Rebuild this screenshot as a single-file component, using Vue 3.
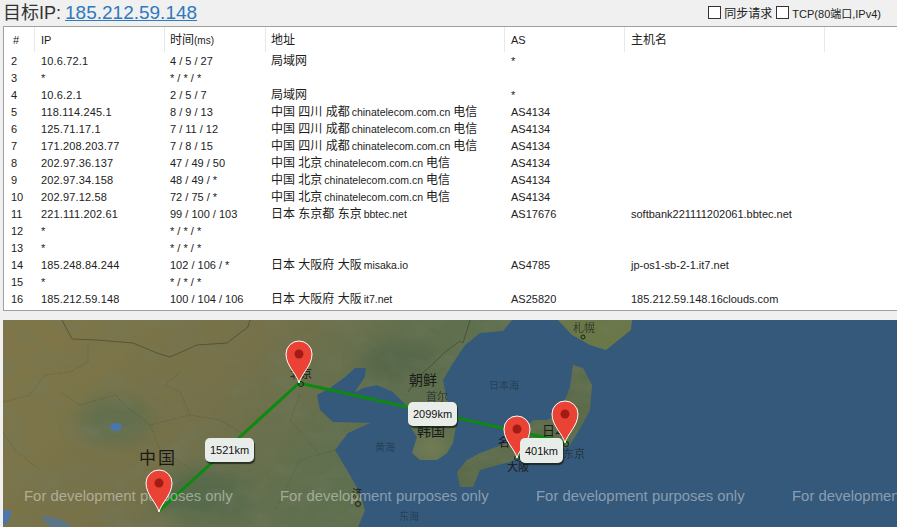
<script setup>
const columns = [
  { label: '#', cls: 'num' },
  { label: 'IP', cls: 'latin first' },
  { label: '时间', small: '(ms)', cls: 'tight' },
  { label: '地址', cls: 'tight' },
  { label: 'AS', cls: 'latin' },
  { label: '主机名' },
]

const rows = [
  ['2', '10.6.72.1', '4 / 5 / 27', '局域网', '', '', '*', ''],
  ['3', '*', '* / * / *', '', '', '', '', ''],
  ['4', '10.6.2.1', '2 / 5 / 7', '局域网', '', '', '*', ''],
  ['5', '118.114.245.1', '8 / 9 / 13', '中国 四川 成都', 'chinatelecom.com.cn', '电信', 'AS4134', ''],
  ['6', '125.71.17.1', '7 / 11 / 12', '中国 四川 成都', 'chinatelecom.com.cn', '电信', 'AS4134', ''],
  ['7', '171.208.203.77', '7 / 8 / 15', '中国 四川 成都', 'chinatelecom.com.cn', '电信', 'AS4134', ''],
  ['8', '202.97.36.137', '47 / 49 / 50', '中国 北京', 'chinatelecom.com.cn', '电信', 'AS4134', ''],
  ['9', '202.97.34.158', '48 / 49 / *', '中国 北京', 'chinatelecom.com.cn', '电信', 'AS4134', ''],
  ['10', '202.97.12.58', '72 / 75 / *', '中国 北京', 'chinatelecom.com.cn', '电信', 'AS4134', ''],
  ['11', '221.111.202.61', '99 / 100 / 103', '日本 东京都 东京', 'bbtec.net', '', 'AS17676', 'softbank221111202061.bbtec.net'],
  ['12', '*', '* / * / *', '', '', '', '', ''],
  ['13', '*', '* / * / *', '', '', '', '', ''],
  ['14', '185.248.84.244', '102 / 106 / *', '日本 大阪府 大阪', 'misaka.io', '', 'AS4785', 'jp-os1-sb-2-1.it7.net'],
  ['15', '*', '* / * / *', '', '', '', '', ''],
  ['16', '185.212.59.148', '100 / 104 / 106', '日本 大阪府 大阪', 'it7.net', '', 'AS25820', '185.212.59.148.16clouds.com'],
].map(([n, ip, time, place, domain, isp, as, host]) => ({ n, ip, time, place, domain, isp, as, host }))

const pins = [
  { id: 'cd', x: 159, y: 512 },
  { id: 'bj', x: 299, y: 383 },
  { id: 'os', x: 517, y: 458 },
  { id: 'tk', x: 565, y: 443 },
]

const pinPath = 'M0 0 C-2 -9 -13 -17 -13 -29 A13 13 0 1 1 13 -29 C13 -17 2 -9 0 0 Z'

const tags = [
  { text: '1521km', left: 202, top: 118, width: 49, height: 24 },
  { text: '2099km', left: 405, top: 82, width: 49, height: 24 },
  { text: '401km', left: 517, top: 118, width: 43, height: 25 },
]

const watermarks = [24, 280, 536, 792]

const mainland = 'M3 320 L512 320 L503 331 L480 333 L465 345 L453 363 L443 380 L447 400 L457 420 L453 443 L447 453 L437 460 L420 460 L412 453 L417 437 L408 423 L408 407 L393 392 L377 385 L363 388 L355 392 L365 377 L366 368 L355 368 L345 377 L330 388 L317 395 L320 410 L333 422 L370 423 L348 433 L335 450 L347 470 L360 493 L365 510 L358 527 L3 527 Z'
const honshu = 'M467 460 L480 453 L507 443 L520 433 L533 420 L547 420 L560 413 L570 387 L573 365 L583 368 L592 385 L590 410 L582 425 L570 445 L560 450 L540 452 L525 455 L510 462 L498 465 L480 470 L473 487 L460 487 L457 472 Z'
const hokkaido = 'M558 320 L632 320 L631 330 L606 350 L590 345 L572 335 Z'

const mapLabels = [
  { text: '中国', x: 139, y: 464, size: 17, cls: 'strong', gap: 2 },
  { text: '朝鲜', x: 409, y: 385, size: 14, cls: 'strong', gap: 0 },
  { text: '韩国', x: 417, y: 436, size: 14, cls: 'strong', gap: 0 },
  { text: '首尔', x: 426, y: 401, size: 11, cls: 'mid', gap: 0 },
  { text: '北京', x: 290, y: 378, size: 11, cls: 'strong', gap: 0 },
  { text: '名', x: 498, y: 447, size: 12, cls: 'strong', gap: 0 },
  { text: '大阪', x: 507, y: 471, size: 11, cls: 'strong', gap: 0 },
  { text: '日本', x: 542, y: 435, size: 13, cls: 'strong', gap: 0 },
  { text: '东京', x: 563, y: 458, size: 11, cls: 'mid', gap: 0 },
  { text: '日本海', x: 489, y: 389, size: 10, cls: 'sea', gap: 0 },
  { text: '黄海', x: 375, y: 451, size: 10, cls: 'sea', gap: 0 },
  { text: '东海', x: 399, y: 520, size: 10, cls: 'sea', gap: 0 },
  { text: '济', x: 352, y: 497, size: 10, cls: 'strong', gap: 0 },
  { text: '札幌', x: 573, y: 332, size: 11, cls: 'mid', gap: 0 },
]
</script>

<template>
  <div class="page">
    <header class="topbar">
      <div class="title">目标IP: <a class="target">185.212.59.148</a></div>
      <div class="options">
        <span class="box"></span><span class="opt">同步请求</span>
        <span class="box second"></span><span class="opt small">TCP(80端口,IPv4)</span>
      </div>
    </header>

    <section class="panel">
      <div class="row head">
        <div v-for="c in columns" :key="c.label" class="cell" :class="c.cls">
          {{ c.label }}<span v-if="c.small" class="unit">{{ c.small }}</span>
        </div>
      </div>
      <div v-for="r in rows" :key="r.n" class="row">
        <div class="cell num">{{ r.n }}</div>
        <div class="cell wide">{{ r.ip }}</div>
        <div class="cell tight">{{ r.time }}</div>
        <div class="cell tight">
          <span class="cjk">{{ r.place }}</span>
          <span v-if="r.domain" class="domain">{{ r.domain }}</span>
          <span v-if="r.isp" class="cjk">{{ r.isp }}</span>
        </div>
        <div class="cell">{{ r.as }}</div>
        <div class="cell">{{ r.host }}</div>
      </div>
    </section>

    <section class="map">
      <svg class="canvas" viewBox="3 320 894 207" preserveAspectRatio="none">
        <defs>
          <linearGradient id="landGrad" gradientUnits="userSpaceOnUse" x1="60" y1="330" x2="300" y2="527">
            <stop offset="0" stop-color="#7e7648" />
            <stop offset="0.5" stop-color="#76714a" />
            <stop offset="0.8" stop-color="#66704e" />
            <stop offset="1" stop-color="#5f7050" />
          </linearGradient>
          <filter id="soft" x="-5%" y="-5%" width="110%" height="110%"><feGaussianBlur stdDeviation="0.7" /></filter>
          <filter id="blur" x="-40%" y="-40%" width="180%" height="180%"><feGaussianBlur stdDeviation="9" /></filter>
          <filter id="terrain" x="0" y="0" width="100%" height="100%">
            <feTurbulence type="fractalNoise" baseFrequency="0.03 0.045" numOctaves="4" seed="7" />
            <feColorMatrix type="matrix" values="0 0 0 0 0.17  0 0 0 0 0.2  0 0 0 0 0.12  2.4 0 0 0 -1.05" />
          </filter>
          <clipPath id="landClip">
            <path :d="mainland" />
            <path :d="honshu" />
            <path :d="hokkaido" />
          </clipPath>
        </defs>

        <rect x="3" y="320" width="894" height="207" fill="#35597a" />

        <g filter="url(#soft)">
          <path fill="url(#landGrad)" :d="mainland" />
          <path fill="#5c6c4c" :d="honshu" />
          <path fill="#6a7849" :d="hokkaido" />
        </g>

        <g clip-path="url(#landClip)">
          <ellipse cx="115" cy="420" rx="38" ry="24" fill="#64704e" filter="url(#blur)" />
          <ellipse cx="205" cy="495" rx="50" ry="26" fill="#576a4b" filter="url(#blur)" />
          <ellipse cx="400" cy="362" rx="40" ry="20" fill="#566748" filter="url(#blur)" />
          <ellipse cx="432" cy="448" rx="14" ry="10" fill="#7c8455" filter="url(#blur)" />
          <rect x="3" y="320" width="640" height="207" filter="url(#terrain)" opacity="0.4" />
        </g>

        <g fill="#4a76ad" filter="url(#soft)">
          <ellipse cx="116" cy="427" rx="6" ry="4" />
          <path d="M3 510 L12 511 L8 522 L3 525 Z" />
          <path d="M40 516 Q60 515 72 527 L50 527 Z" opacity="0.6" />
        </g>

        <path class="border solid" d="M62 320 L72 339 L97 340 L133 343 L157 353 L170 357 L197 345 L227 343 L248 327 L250 320" />
        <path class="border solid" d="M408 392 L420 375 L432 365 L445 352 L460 341 L463 343 L470 320" />
        <path class="border" d="M3 402 L30 395 L45 375 L70 372 L88 362 L88 345 M80 405 L60 392 M80 405 L115 395 L130 410 L150 425 L170 420 L190 415 L180 392 L165 385 L180 372 M150 425 L160 450 L190 468 M3 432 L15 450 L40 470 M190 415 L220 420 L245 435 M300 395 L290 420 L320 455 M335 450 L300 460 L275 510" />

        <line class="route" x1="159" y1="511" x2="299" y2="383" />
        <polyline class="route" points="299,383 565,442 517,457" />

        <circle cx="583" cy="337" r="2" class="dot" />
        <circle cx="358" cy="504" r="2.5" class="dot" />
        <circle cx="301" cy="384" r="2.5" class="dot" />
        <circle cx="517" cy="458" r="2.5" class="dot" />
        <circle cx="566" cy="444" r="2.5" class="dot" />

        <text
          v-for="l in mapLabels"
          :key="l.text + l.x"
          :x="l.x"
          :y="l.y"
          :font-size="l.size"
          :letter-spacing="l.gap"
          class="place"
          :class="l.cls"
        >{{ l.text }}</text>

        <text v-for="x in watermarks" :key="x" :x="x" y="501" class="mark">For development purposes only</text>

        <g v-for="p in pins" :key="p.id" :transform="`translate(${p.x} ${p.y})`">
          <path :d="pinPath" class="pin" />
          <circle cx="0" cy="-29" r="4.5" fill="#a31c14" />
        </g>
      </svg>

      <div
        v-for="t in tags"
        :key="t.text"
        class="tag"
        :style="{ left: t.left + 'px', top: t.top + 'px', width: t.width + 'px', height: t.height + 'px' }"
      >{{ t.text }}</div>
    </section>
  </div>
</template>

<style scoped>
.page {
  width: 897px;
  height: 527px;
  display: flex;
  flex-direction: column;
  overflow: hidden;
  background: #f0f0f0;
  color: #222;
  font-family: "Liberation Sans", "Noto Sans CJK SC", sans-serif;
  font-size: 11px;
}
.topbar {
  flex: none;
  height: 26px;
  display: flex;
  align-items: center;
  justify-content: space-between;
  padding: 0 16px 0 3px;
}
.title {
  font-size: 18px;
  line-height: 26px;
  color: #333;
  white-space: nowrap;
}
.target {
  font-size: 19px;
  color: #2f79bd;
  text-decoration: underline;
  margin-left: -1px;
}
.options {
  display: flex;
  align-items: center;
  margin-top: -1px;
}
.box {
  width: 13px;
  height: 13px;
  box-sizing: border-box;
  border: 1px solid #333;
  background: #fff;
  margin-right: 3px;
}
.box.second {
  margin-left: 4px;
  margin-right: 3px;
}
.opt {
  font-size: 12px;
  color: #222;
}
.opt.small {
  font-size: 11px;
}
.panel {
  flex: none;
  height: 285px;
  box-sizing: border-box;
  margin-left: 3px;
  border: 1px solid #a0a0a0;
  border-right: none;
  background: #fff;
}
.row {
  display: grid;
  grid-template-columns: 31px 130px 101px 239px 120px 200px;
  height: 17px;
  line-height: 17px;
  white-space: nowrap;
}
.row.head {
  height: 26px;
  line-height: 27px;
  font-size: 12px;
}
.cell {
  padding-left: 6px;
  overflow: hidden;
}
.cell.tight {
  padding-left: 5px;
}
.cell.num {
  padding-left: 7px;
}
.cell.wide {
  letter-spacing: 0.15px;
}
.head .cell {
  border-right: 1px solid #e8e8e8;
  margin-bottom: 1px;
}
.head .cell.num {
  padding-left: 9px;
  font-size: 11px;
}
.head .cell.latin {
  font-size: 11px;
}
.unit {
  font-size: 10px;
}
.cjk {
  font-size: 12px;
  color: #1c1c1c;
}
.domain {
  font-size: 10.5px;
  margin: 0 3px 0 2px;
}
.map {
  position: relative;
  flex: 1;
  margin: 9px 0 0 3px;
  overflow: hidden;
}
.canvas {
  display: block;
  width: 894px;
  height: 207px;
}
.border {
  fill: none;
  stroke: #3c3c2c;
  stroke-width: 0.6;
  stroke-dasharray: 1.5 1.5;
  opacity: 0.55;
}
.border.solid {
  stroke-dasharray: none;
  stroke-width: 0.8;
  opacity: 0.7;
}
.route {
  fill: none;
  stroke: #0c8a10;
  stroke-width: 3;
}
.dot {
  fill: none;
  stroke: #1b2418;
  stroke-width: 1;
}
.place {
  font-family: "Noto Sans CJK SC", sans-serif;
}
.place.strong {
  fill: #191a16;
}
.place.mid {
  fill: #1c2424;
  opacity: 0.7;
}
.place.sea {
  fill: #22384d;
  opacity: 0.75;
}
.mark {
  font-family: "Liberation Sans", sans-serif;
  font-size: 14.9px;
  fill: rgba(255, 255, 255, 0.42);
}
.pin {
  fill: #ea4335;
  stroke: #fff;
  stroke-width: 1;
}
.tag {
  position: absolute;
  display: flex;
  align-items: center;
  justify-content: center;
  background: #e9edea;
  border-radius: 5px;
  box-shadow: 1px 2px 1px rgba(20, 30, 20, 0.75);
  font-size: 11px;
  color: #111;
}
</style>

<style>
html,
body {
  margin: 0;
  overflow: hidden;
  background: #f0f0f0;
}
</style>
